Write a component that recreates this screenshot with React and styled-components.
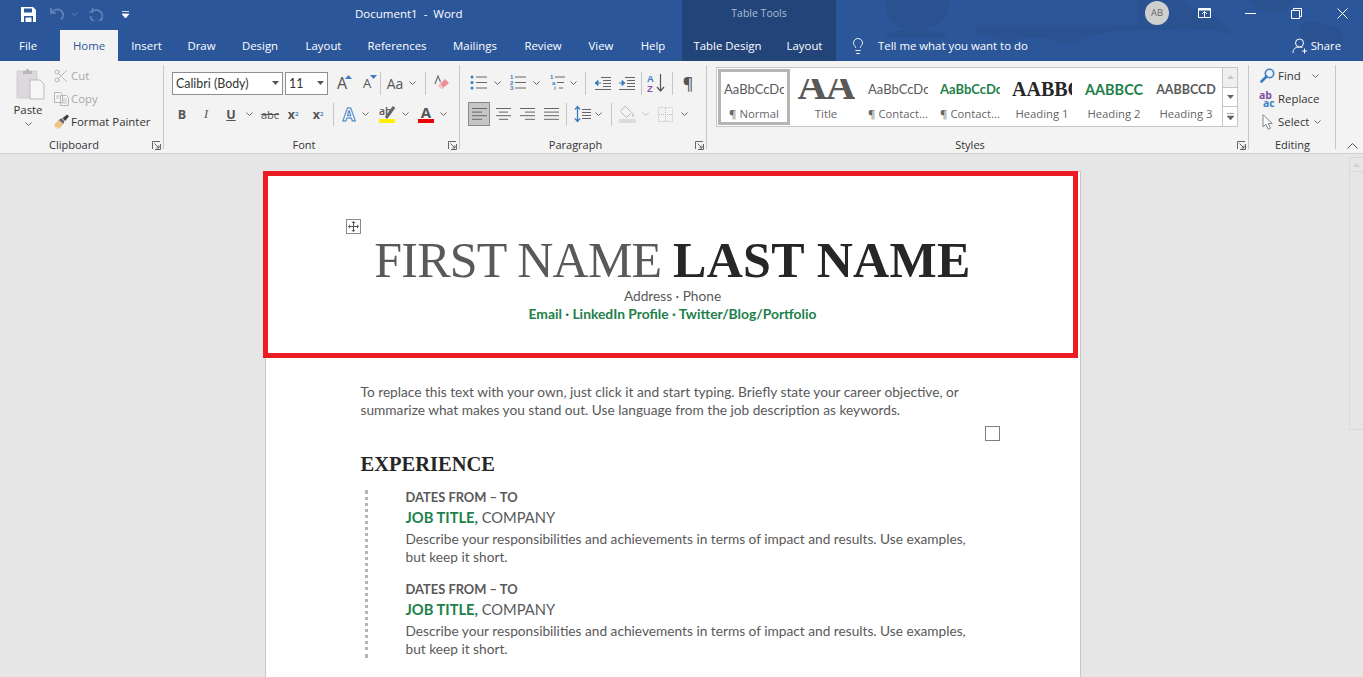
import styled, { createGlobalStyle } from "styled-components";
import { Lightbulb, Scissors } from "lucide-react";

const GlobalStyle = createGlobalStyle`
  html, body {
    margin: 0;
    height: 100%;
    overflow: hidden;
    background: #e6e6e6;
  }
  * { box-sizing: border-box; }
`;

const UI = `"Open Sans", "Noto Sans", sans-serif`;
const BODY = `Lato, "Open Sans", sans-serif`;
const SERIF = `"Liberation Serif", serif`;
const GREEN = "#217f4b";

const Window = styled.div`
  width: 1363px;
  height: 677px;
  display: flex;
  flex-direction: column;
  overflow: hidden;
  font-family: ${UI};
`;

const Chrome = styled.header`
  position: relative;
  background: #2b579a;
  color: #fff;
  height: 61px;
  flex: none;
`;

const ChromeArt = styled.svg`
  position: absolute;
  left: 836px;
  top: 0;
`;

const TitleBar = styled.div`
  position: relative;
  display: grid;
  grid-template-columns: 355px 327px 154px 1fr;
  height: 30px;
`;

const Qat = styled.div`
  display: flex;
  align-items: center;
  padding-left: 14px;
  height: 28px;
`;

const QatSlot = styled.div`
  display: flex;
  align-items: center;
  justify-content: center;
  width: ${(p) => p.$w}px;
  margin-left: ${(p) => p.$ml || 0}px;
`;

const DocTitle = styled.div`
  font-size: 11.5px;
  line-height: 28px;
  white-space: pre;
`;

const ContextTitle = styled.div`
  background: #234479;
  color: #a9bcd8;
  font-size: 10.5px;
  line-height: 27px;
  text-align: center;
`;

const WindowControls = styled.div`
  display: flex;
  justify-content: flex-end;
  align-items: flex-start;
  margin-right: -2px;
`;

const Avatar = styled.div`
  width: 24px;
  height: 24px;
  margin: 1px 12px 0 0;
  border-radius: 50%;
  background: #cfcfcf;
  color: #666;
  font-size: 9.5px;
  line-height: 24px;
  text-align: center;
`;

const WinBtn = styled.div`
  width: 46px;
  height: 26px;
  display: flex;
  align-items: center;
  justify-content: center;
`;

const TabRow = styled.nav`
  position: relative;
  display: flex;
  height: 31px;
`;

const Tab = styled.div`
  width: ${(p) => p.$w}px;
  margin-right: ${(p) => p.$mr || 0}px;
  padding-left: ${(p) => p.$pl || 0}px;
  text-align: ${(p) => (p.$pl ? "left" : "center")};
  font-size: 11.4px;
  line-height: 31px;
  background: ${(p) => (p.$active ? "#f3f3f3" : "transparent")};
  color: ${(p) => (p.$active ? "#2b579a" : "#fff")};
`;

const ContextTabs = styled.div`
  display: flex;
  background: #234479;
`;

const TellMe = styled.div`
  display: flex;
  align-items: center;
  gap: 11px;
  margin-left: 13px;
  font-size: 11.4px;
`;

const Share = styled.div`
  display: flex;
  align-items: center;
  gap: 3px;
  margin-left: auto;
  padding-right: 22px;
  font-size: 11.3px;
`;

const Ribbon = styled.section`
  display: flex;
  height: 93px;
  flex: none;
  background: #f3f3f3;
  border-bottom: 1px solid #d2d2d2;
  color: #444;
  font-size: 11.4px;
`;

const Group = styled.div`
  position: relative;
  width: ${(p) => p.$w}px;
  flex: none;
  display: flex;
  flex-direction: column;
  height: 92px;
  &::after {
    content: "";
    position: absolute;
    right: 0;
    top: 4px;
    bottom: 4px;
    width: 1px;
    background: #c6c6c6;
  }
`;

const GroupBody = styled.div`
  height: 76px;
  padding-left: ${(p) => p.$pl ?? 8}px;
`;

const GroupLabel = styled.div`
  position: relative;
  height: 16px;
  line-height: 16px;
  text-align: center;
  font-size: 11px;
  color: #333;
  padding-right: ${(p) => (p.$plain ? 0 : 16)}px;
`;

const Launcher = styled.svg`
  position: absolute;
  right: 3px;
  top: 4px;
`;

const ToolStack = styled.div`
  display: flex;
  flex-direction: column;
  gap: 7px;
  padding-top: 10px;
`;

const ToolRow = styled.div`
  display: flex;
  align-items: center;
  height: 24px;
`;

const Slot = styled.div`
  position: relative;
  flex: none;
  display: flex;
  align-items: center;
  justify-content: center;
  width: ${(p) => p.$w}px;
  height: 24px;
  margin-left: ${(p) => p.$ml || 0}px;
  color: ${(p) => p.$color || "#555"};
  font-size: ${(p) => p.$size || 12}px;
  font-weight: ${(p) => p.$weight || 400};
  font-style: ${(p) => (p.$italic ? "italic" : "normal")};
  font-family: ${(p) => p.$font || UI};
  ${(p) => p.$pressed && "background: #c6c6c6; border: 1px solid #8a8a8a;"}
`;

const Sep = styled.div`
  flex: none;
  width: 1px;
  height: 23px;
  margin-left: ${(p) => p.$ml || 0}px;
  background: #c6c6c6;
`;

const ComboBox = styled.div`
  flex: none;
  display: flex;
  align-items: center;
  justify-content: space-between;
  width: ${(p) => p.$w}px;
  height: 23px;
  margin-left: ${(p) => p.$ml || 0}px;
  padding: 0 3px;
  background: #fff;
  border: 1px solid #8f8f8f;
  color: #333;
  font-family: ${BODY};
  font-size: 12.4px;
`;

const Underlined = styled.span`
  text-decoration: underline;
`;

const Struck = styled.span`
  text-decoration: line-through;
`;

const Sub = styled.sub`
  font-size: 6px;
  color: #4a82bd;
  line-height: 0;
`;

const Sup = styled.sup`
  font-size: 6px;
  color: #4a82bd;
  line-height: 0;
`;

const OutlineA = styled.span`
  color: #fff;
  font-size: 18px;
  font-weight: 700;
  -webkit-text-stroke: 1px #3d7fc6;
`;

const ColorA = styled.span`
  display: block;
  width: 16px;
  color: #555;
  font-size: 15px;
  font-weight: 700;
  line-height: 14px;
  text-align: center;
  border-bottom: 4px solid ${(p) => p.$bar};
`;

const HighlightMark = styled.span`
  position: relative;
  display: block;
  width: 16px;
  height: 18px;
  font-size: 10.5px;
  font-weight: 600;
  line-height: 13px;
  color: #555;
  border-bottom: 4px solid #ffef00;
`;

const HighlightPen = styled.svg`
  position: absolute;
  right: 0;
  top: 0;
`;

const Caret = styled.svg`
  position: absolute;
  right: ${(p) => p.$r}px;
  top: ${(p) => p.$t}px;
`;

const ClipLayout = styled.div`
  display: flex;
  padding-top: 3px;
`;

const PasteColumn = styled.div`
  width: 53px;
  padding: 4px 0 0 16px;
  color: #333;
`;

const PasteText = styled.div`
  width: 44px;
  margin: -2px 0 0 -10px;
  text-align: center;
  line-height: 18px;
`;

const PasteCaret = styled.div`
  width: 24px;
  line-height: 6px;
  text-align: center;
`;

const CommandColumn = styled.div`
  display: flex;
  flex-direction: column;
`;

const Command = styled.div`
  display: flex;
  align-items: center;
  height: 23px;
  color: ${(p) => (p.$dim ? "#a8a8a8" : "#333")};
  gap: ${(p) => p.$gap ?? 2}px;
`;

const CommandIcon = styled.span`
  display: flex;
  justify-content: center;
  width: 16px;
`;

const EditColumn = styled(CommandColumn)`
  padding: 3px 0 0 10px;
`;

const ReplaceMark = styled.span`
  display: block;
  width: 18px;
  font-size: 10.5px;
  line-height: 8px;
  font-weight: 700;
  color: #7d4fa5;
`;

const ReplaceAc = styled.span`
  display: block;
  color: #3d7fc6;
  padding-left: 4px;
`;

const Gallery = styled.div`
  display: flex;
  width: 522px;
  height: 60px;
  margin: 6px 0 0 9px;
  padding-left: 1px;
  background: #fff;
  border: 1px solid #c6c6c6;
`;

const StyleCell = styled.div`
  width: 72px;
  height: 56px;
  margin-top: 1px;
  display: flex;
  flex-direction: column;
  align-items: center;
  overflow: hidden;
  border: ${(p) => (p.$active ? "3px solid #b5b5b2" : "3px solid transparent")};
`;

const StylePreview = styled.div`
  width: 60px;
  height: 34px;
  display: flex;
  align-items: center;
  justify-content: ${(p) => p.$align || "flex-start"};
  overflow: hidden;
  white-space: nowrap;
  color: ${(p) => p.$color || "#595959"};
  font-family: ${(p) => p.$font || BODY};
  font-size: ${(p) => p.$size || 13}px;
  font-weight: ${(p) => p.$weight || 400};
`;

const TitlePreview = styled.div`
  height: 20px;
  margin-top: 7px;
  margin-bottom: 7px;
  overflow: hidden;
  font-family: ${SERIF};
  font-size: 41px;
  font-weight: 700;
  line-height: 20px;
  color: #595959;
  letter-spacing: -1px;
  white-space: nowrap;
  span {
    display: block;
    margin-top: -4px;
  }
`;

const StyleName = styled.div`
  font-size: 11.3px;
  color: #666;
  line-height: 16px;
  white-space: nowrap;
`;

const GalleryScroll = styled.div`
  margin-left: auto;
  width: 15px;
  display: flex;
  flex-direction: column;
  border-left: 1px solid #c6c6c6;
`;

const ScrollBtn = styled.div`
  flex: 1;
  display: flex;
  align-items: center;
  justify-content: center;
  background: ${(p) => (p.$off ? "#efefef" : "#fff")};
  & + & {
    border-top: 1px solid #c6c6c6;
  }
`;

const CollapseSlot = styled.div`
  flex: 1;
  display: flex;
  align-items: flex-end;
  justify-content: flex-end;
  padding: 0 5px 4px 0;
`;

const Workspace = styled.main`
  flex: 1;
  display: flex;
  min-height: 0;
  background: #e6e6e6;
`;

const PageArea = styled.div`
  flex: 1;
  display: flex;
  justify-content: center;
  padding: 17px 4px 0 0;
  overflow: hidden;
`;

const Page = styled.article`
  position: relative;
  width: 816px;
  height: 600px;
  flex: none;
  padding: 62px 95px 0 95px;
  background: #fff;
  border: 1px solid #c8c8c8;
  color: #595959;
  font-family: ${BODY};
  font-size: 13.7px;
`;

const Annotation = styled.div`
  position: absolute;
  left: -3px;
  top: -1px;
  width: 815px;
  height: 187px;
  border: 5px solid #ed1c24;
`;

const MoveHandle = styled.div`
  position: absolute;
  left: 80px;
  top: 47px;
  width: 15px;
  height: 15px;
  display: flex;
  align-items: center;
  justify-content: center;
  background: #fff;
  border: 1px solid #8c8c8c;
`;

const ResizeHandle = styled.div`
  position: absolute;
  left: 719px;
  top: 254px;
  width: 15px;
  height: 15px;
  border: 1px solid #7f7f7f;
`;

const Name = styled.h1`
  margin: 0;
  text-align: center;
  font-family: ${SERIF};
  font-size: 50px;
  font-weight: 400;
  line-height: 53px;
  letter-spacing: -0.8px;
  color: #595959;
  white-space: nowrap;
`;

const LastName = styled.strong`
  color: #262626;
  font-weight: 700;
  letter-spacing: 0.3px;
`;

const ContactLine = styled.div`
  text-align: center;
  line-height: 18px;
  color: ${(p) => (p.$green ? GREEN : "#595959")};
  font-weight: ${(p) => (p.$green ? 700 : 400)};
  font-size: ${(p) => (p.$green ? 13.85 : 13.7)}px;
`;

const Objective = styled.p`
  margin: 60px 0 0;
  line-height: 18px;
`;

const SectionHeading = styled.h2`
  margin: 34px 0 0;
  font-family: ${SERIF};
  font-size: 20.5px;
  font-weight: 700;
  line-height: 23px;
  color: #262626;
`;

const Timeline = styled.div`
  margin: 14px 0 0 4px;
  padding-left: 38px;
  border-left: 3px dotted #b5b5b5;
  width: 610px;
`;

const Entry = styled.div`
  & + & {
    margin-top: 16px;
  }
`;

const Dates = styled.div`
  font-size: 12.9px;
  font-weight: 700;
  line-height: 14px;
  color: #595959;
`;

const JobLine = styled.div`
  margin-top: 2px;
  font-size: 14.7px;
  line-height: 22px;
`;

const JobTitle = styled.b`
  color: ${GREEN};
`;

const Describe = styled.p`
  margin: 2px 0 0;
  line-height: 18px;
`;

const VScroll = styled.aside`
  flex: none;
  align-self: flex-start;
  width: 14px;
  height: 273px;
  margin-top: 3px;
  border: 1px solid #d9d9d9;
  border-right: none;
`;

const VScrollUp = styled.div`
  height: 14px;
  display: flex;
  align-items: center;
  justify-content: center;
  border-bottom: 1px solid #d9d9d9;
`;

/* ---- drawings ---- */

const Chevron = ({ color = "#666" }) => (
  <svg width="7" height="4" viewBox="0 0 7 4">
    <path d="M.5.5l3 3 3-3" fill="none" stroke={color} />
  </svg>
);

const Corner = () => (
  <Launcher width="9" height="9" viewBox="0 0 9 9">
    <path d="M.5 8V.5H8M8.5 3v5.5H3M2.5 2.5L7 7M4.5 7H7V4.5" fill="none" stroke="#666" />
  </Launcher>
);

const Lines = ({ rows, stroke = "#666" }) => (
  <svg width="17" height="14" viewBox="0 0 17 14">
    {rows.map(([x1, x2], i) => (
      <path key={i} d={`M${x1} ${1.5 + i * 3.6}H${x2}`} stroke={stroke} />
    ))}
  </svg>
);

const ListIcon = ({ kind }) => {
  const marks = [2, 7.5, 13];
  return (
    <svg width="18" height="16" viewBox="0 0 18 16">
      {marks.map((y, i) => (
        <g key={y}>
          {kind === "bullet" && <circle cx="2" cy={y} r="1.5" fill="#3e7cbf" />}
          {kind !== "bullet" && (
            <text x={kind === "multi" ? 1 + i * 2 : 1} y={y + 2} fontSize="6" fontWeight="700" fill="#3e7cbf" fontFamily="Liberation Sans">
              {kind === "multi" ? "1ai"[i] : i + 1}
            </text>
          )}
          <path d={`M${kind === "multi" ? 6 + i * 2 : 6} ${y}H${kind === "multi" ? 16 - i : 17}`} stroke="#666" />
        </g>
      ))}
    </svg>
  );
};

const IndentIcon = ({ flip }) => (
  <svg width="17" height="14" viewBox="0 0 17 14">
    <path d="M7 1.5h10M9 4.5h8M9 7.5h8M9 10.5h8M1 13.5h16" stroke="#666" />
    <path d={flip ? "M1 7h5M4 4.5L7 7l-3 2.5z" : "M7 7H2M4 4.5L1 7l3 2.5z"} fill="#3e7cbf" stroke="#3e7cbf" />
  </svg>
);

const SortIcon = () => (
  <svg width="20" height="20" viewBox="0 0 20 20">
    <text x="0" y="9" fontSize="9.5" fontWeight="700" fill="#3e7cbf" fontFamily="Liberation Sans">A</text>
    <text x="0" y="19" fontSize="9.5" fontWeight="700" fill="#8a57a8" fontFamily="Liberation Sans">Z</text>
    <path d="M13.5 1v17M10 14l3.5 4 3.5-4" fill="none" stroke="#555" strokeWidth="1.2" />
  </svg>
);

const LineSpacingIcon = () => (
  <svg width="17" height="18" viewBox="0 0 17 18">
    <path d="M3.5 2v14M1 4.5l2.5-3 2.5 3M1 13.5l2.5 3 2.5-3" fill="none" stroke="#3e7cbf" strokeWidth="1.3" />
    <path d="M8 4.5h9M8 7.5h9M8 10.5h9M8 13.5h9" stroke="#666" />
  </svg>
);

const ShadingIcon = () => (
  <svg width="17" height="18" viewBox="0 0 17 18">
    <path d="M6 1l6.5 6.5L7.5 12.5 1.5 6.5z" fill="#f6f6f6" stroke="#b8b8b8" />
    <path d="M13 7.5c1.5 1.5 2.5 3 2 4s-2 0-2-1z" fill="#c9c9c9" />
    <rect y="14" width="17" height="4" fill="#dcdcdc" />
  </svg>
);

const BorderIcon = () => (
  <svg width="15" height="15" viewBox="0 0 15 15">
    <rect x=".5" y=".5" width="14" height="14" fill="none" stroke="#d2b9d2" strokeDasharray="1 1" />
    <path d="M7.5 1v13M1 7.5h13" stroke="#bcbcbc" strokeDasharray="1 1" />
  </svg>
);

const EraserIcon = () => (
  <svg width="16" height="16" viewBox="0 0 16 16">
    <path d="M1 9L4 1l2.5 6" fill="none" stroke="#777" strokeWidth="1.3" />
    <path d="M4 11l7-7 4 4-7 6z" fill="#ee8f98" />
    <path d="M4 11l2-2 4 4-2 1z" fill="#f8c9cc" />
  </svg>
);

const PasteIcon = () => (
  <svg width="29" height="32" viewBox="0 0 29 32">
    <path d="M1 3h20v27H1z" fill="#dcd8dc" stroke="#d0ccd0" />
    <path d="M7 3h3c0-3 3-3 3 0h3v3H7z" fill="#b9b5b9" />
    <path d="M14 12h10l4 4v15H14z" fill="#f6f6f6" stroke="#bdbabd" />
  </svg>
);

const CopyIcon = () => (
  <svg width="15" height="14" viewBox="0 0 15 14">
    <path d="M.5.5h6l2 2v8h-8zM6.5 3.5h6l2 2v8h-8z" fill="#f6f6f6" stroke="#b5b5b5" />
    <path d="M2 4h4M2 6h3M8 7h5M8 9h5M8 11h5" stroke="#c4c4c4" />
  </svg>
);

const BrushIcon = () => (
  <svg width="17" height="16" viewBox="0 0 17 16">
    <path d="M1 11l5-5 5 4-4 5H4l1-2-2 1z" fill="#edc488" />
    <path d="M6 6l3-2 3 3-1 3z" fill="#666" />
    <path d="M10 4l5-4 2 2-4 5z" fill="#3d3d3d" />
  </svg>
);

const FindIcon = () => (
  <svg width="15" height="15" viewBox="0 0 15 15">
    <circle cx="9.5" cy="5.5" r="4.2" fill="#eaf2fb" stroke="#3e7cbf" strokeWidth="1.6" />
    <path d="M6.5 8.5L1.5 13.5" stroke="#3e7cbf" strokeWidth="2.6" strokeLinecap="round" />
  </svg>
);

const CursorIcon = () => (
  <svg width="11" height="16" viewBox="0 0 11 16">
    <path d="M1 .8v12l3-2.6 2.2 5 2.2-1-2.2-4.8h4z" fill="#fff" stroke="#777" strokeWidth=".9" strokeLinejoin="round" />
  </svg>
);

const SmallTriangle = ({ up, color }) => (
  <svg width="7" height="4" viewBox="0 0 7 4">
    <path d={up ? "M0 4l3.5-4L7 4z" : "M0 0l3.5 4L7 0z"} fill={color} />
  </svg>
);

const ChromeBackground = () => (
  <ChromeArt width="527" height="61" viewBox="0 0 527 61">
    <g fill="#2a5290">
      <path d="M50 0c-2 15 5 30 25 30s40-5 38-30z" />
      <path d="M48 34c15-6 40-6 65 0l-5 4H55z" />
      <path d="M140 25h162V0h43c3 10 35 10 47 27 8 7 3 9-12 3-30-2-80 0-105 2-17 2-30 6-32 12l-17 1c-11-7-36-12-51-3l-35-8z" />
      <path d="M463 30c0-10 17-10 27-5 15 0 20 10 15 20-5 7-35 5-42-15zM415 0c2 8 10 14 22 13 12 0 18-6 20-13z" />
    </g>
  </ChromeArt>
);

const App = () => (
  <Window>
    <GlobalStyle />
    <Chrome>
      <ChromeBackground />
      <TitleBar>
        <Qat>
          <QatSlot $w={28}>
            <svg width="15" height="15" viewBox="0 0 15 15">
              <path d="M0 0h12l3 3v12H0z" fill="#fff" />
              <path d="M3 1.5h8v4H3z" fill="#2b579a" />
              <path d="M3 9h9v6H3z" fill="#2b579a" />
              <path d="M4.5 10.5h6v4.5h-6z" fill="#fff" />
            </svg>
          </QatSlot>
          <QatSlot $w={24} $ml={3}>
            <svg width="15" height="14" viewBox="0 0 15 14">
              <path d="M1 1v5h5M1.5 5.5C4 2.5 7 1.5 10 3c4 2 4 7 1 9.5" fill="none" stroke="#6285b6" strokeWidth="1.7" />
            </svg>
          </QatSlot>
          <QatSlot $w={10}>
            <Chevron color="#6285b6" />
          </QatSlot>
          <QatSlot $w={24} $ml={5}>
            <svg width="14" height="14" viewBox="0 0 14 14">
              <path d="M3.5 1v4h-3M3.5 4.5A6 6 0 1 1 1.5 9" fill="none" stroke="#6285b6" strokeWidth="1.7" />
            </svg>
          </QatSlot>
          <QatSlot $w={24} $ml={5}>
            <svg width="7" height="7" viewBox="0 0 7 7">
              <path d="M0 .5h7M0 3h7L3.5 7z" stroke="#fff" strokeWidth=".8" fill="#fff" />
            </svg>
          </QatSlot>
        </Qat>
        <DocTitle>{"Document1  -  Word"}</DocTitle>
        <ContextTitle>Table Tools</ContextTitle>
        <WindowControls>
          <Avatar>AB</Avatar>
          <WinBtn>
            <svg width="13" height="10" viewBox="0 0 13 10">
              <path d="M.5.5h12v9H.5z" fill="none" stroke="#fff" />
              <path d="M.5 1.5h12" stroke="#fff" strokeWidth="2" />
              <path d="M6.5 9V4M4 6l2.5-2.5L9 6" fill="none" stroke="#fff" />
            </svg>
          </WinBtn>
          <WinBtn>
            <svg width="11" height="1" viewBox="0 0 11 1">
              <path d="M0 .5h11" stroke="#fff" />
            </svg>
          </WinBtn>
          <WinBtn>
            <svg width="11" height="11" viewBox="0 0 11 11">
              <path d="M.5 2.5h8v8h-8zM2.5 2.5v-2h8v8h-2" fill="none" stroke="#fff" />
            </svg>
          </WinBtn>
          <WinBtn>
            <svg width="11" height="11" viewBox="0 0 11 11">
              <path d="M.5.5l10 10M10.5.5l-10 10" stroke="#fff" />
            </svg>
          </WinBtn>
        </WindowControls>
      </TitleBar>
      <TabRow>
        <Tab $w={56} $mr={4} $pl={19}>File</Tab>
        <Tab $w={58} $active>Home</Tab>
        <Tab $w={57}>Insert</Tab>
        <Tab $w={53}>Draw</Tab>
        <Tab $w={64}>Design</Tab>
        <Tab $w={63}>Layout</Tab>
        <Tab $w={84}>References</Tab>
        <Tab $w={72}>Mailings</Tab>
        <Tab $w={64}>Review</Tab>
        <Tab $w={52}>View</Tab>
        <Tab $w={52} $mr={3}>Help</Tab>
        <ContextTabs>
          <Tab $w={91}>Table Design</Tab>
          <Tab $w={63}>Layout</Tab>
        </ContextTabs>
        <TellMe>
          <Lightbulb size={18} strokeWidth={1.2} />
          Tell me what you want to do
        </TellMe>
        <Share>
          <svg width="16" height="16" viewBox="0 0 16 16">
            <circle cx="7.5" cy="5" r="4" fill="none" stroke="#fff" />
            <path d="M1 15c0-4 2-6 6.5-6 1 0 2 .2 3 .6M12.5 10.5v5M10 13h5" fill="none" stroke="#fff" />
          </svg>
          Share
        </Share>
      </TabRow>
    </Chrome>

    <Ribbon>
      <Group $w={164}>
        <GroupBody $pl={0}>
          <ClipLayout>
            <PasteColumn>
              <PasteIcon />
              <PasteText>Paste</PasteText>
              <PasteCaret>
                <Chevron />
              </PasteCaret>
            </PasteColumn>
            <CommandColumn>
              <Command $dim>
                <CommandIcon>
                  <Scissors size={16} strokeWidth={1.4} color="#b5b5b5" />
                </CommandIcon>
                Cut
              </Command>
              <Command $dim>
                <CommandIcon>
                  <CopyIcon />
                </CommandIcon>
                Copy
              </Command>
              <Command>
                <CommandIcon>
                  <BrushIcon />
                </CommandIcon>
                Format Painter
              </Command>
            </CommandColumn>
          </ClipLayout>
        </GroupBody>
        <GroupLabel>
          Clipboard
          <Corner />
        </GroupLabel>
      </Group>

      <Group $w={296}>
        <GroupBody>
          <ToolStack>
            <ToolRow>
              <ComboBox $w={111}>
                Calibri (Body)
                <SmallTriangle color="#555" />
              </ComboBox>
              <ComboBox $w={43} $ml={2}>
                11
                <SmallTriangle color="#555" />
              </ComboBox>
              <Slot $w={22} $ml={3} $size={16}>
                A
                <Caret $r={1} $t={4} width="7" height="4" viewBox="0 0 7 4">
                  <path d="M0 4l3.5-4L7 4z" fill="#3e7cbf" />
                </Caret>
              </Slot>
              <Slot $w={22} $ml={3} $size={13}>
                A
                <Caret $r={1} $t={4} width="7" height="4" viewBox="0 0 7 4">
                  <path d="M0 0l3.5 4L7 0z" fill="#3e7cbf" />
                </Caret>
              </Slot>
              <Sep $ml={2} />
              <Slot $w={20} $ml={4} $size={14}>Aa</Slot>
              <Slot $w={14}><Chevron /></Slot>
              <Sep $ml={6} />
              <Slot $w={21} $ml={5}><EraserIcon /></Slot>
            </ToolRow>
            <ToolRow>
              <Slot $w={20} $size={12.5} $weight={700}>B</Slot>
              <Slot $w={24} $ml={2} $size={12.5} $italic $font={SERIF}>I</Slot>
              <Slot $w={26} $size={12.5} $weight={700}><Underlined>U</Underlined></Slot>
              <Slot $w={10}><Chevron /></Slot>
              <Slot $w={26} $ml={3} $size={11}><Struck>abc</Struck></Slot>
              <Slot $w={20} $size={12.5} $weight={700}>x<Sub>2</Sub></Slot>
              <Slot $w={24} $ml={3} $size={12.5} $weight={700}>x<Sup>2</Sup></Slot>
              <Sep $ml={3} />
              <Slot $w={22} $ml={4}><OutlineA>A</OutlineA></Slot>
              <Slot $w={10}><Chevron /></Slot>
              <Slot $w={22} $ml={6}>
                <HighlightMark>
                  ab
                  <HighlightPen width="10" height="14" viewBox="0 0 10 14">
                    <path d="M1 13L9 2" stroke="#666" strokeWidth="3" />
                  </HighlightPen>
                </HighlightMark>
              </Slot>
              <Slot $w={14}><Chevron /></Slot>
              <Slot $w={22} $ml={3}><ColorA $bar="#f00000">A</ColorA></Slot>
              <Slot $w={12}><Chevron /></Slot>
            </ToolRow>
          </ToolStack>
        </GroupBody>
        <GroupLabel>
          Font
          <Corner />
        </GroupLabel>
      </Group>

      <Group $w={247}>
        <GroupBody>
          <ToolStack>
            <ToolRow>
              <Slot $w={22}><ListIcon kind="bullet" /></Slot>
              <Slot $w={14}><Chevron /></Slot>
              <Slot $w={22} $ml={3}><ListIcon kind="number" /></Slot>
              <Slot $w={14}><Chevron /></Slot>
              <Slot $w={21} $ml={4}><ListIcon kind="multi" /></Slot>
              <Slot $w={11}><Chevron /></Slot>
              <Sep $ml={6} />
              <Slot $w={22} $ml={5}><IndentIcon /></Slot>
              <Slot $w={22} $ml={2}><IndentIcon flip /></Slot>
              <Sep $ml={4} />
              <Slot $w={22} $ml={4}><SortIcon /></Slot>
              <Sep $ml={4} />
              <Slot $w={22} $ml={4} $size={16} $weight={600}>¶</Slot>
            </ToolRow>
            <ToolRow>
              <Slot $w={22} $pressed><Lines rows={[[1, 16], [1, 11], [1, 16], [1, 11]]} /></Slot>
              <Slot $w={22} $ml={2}><Lines rows={[[1, 16], [4, 13], [1, 16], [4, 13]]} /></Slot>
              <Slot $w={22} $ml={2}><Lines rows={[[1, 16], [6, 16], [1, 16], [6, 16]]} /></Slot>
              <Slot $w={22} $ml={2}><Lines rows={[[1, 16], [1, 16], [1, 16], [1, 16]]} /></Slot>
              <Sep $ml={4} />
              <Slot $w={22} $ml={4}><LineSpacingIcon /></Slot>
              <Slot $w={11}><Chevron /></Slot>
              <Sep $ml={7} />
              <Slot $w={22} $ml={4}><ShadingIcon /></Slot>
              <Slot $w={14}><Chevron color="#bbb" /></Slot>
              <Slot $w={22} $ml={2}><BorderIcon /></Slot>
              <Slot $w={14} $ml={1}><Chevron /></Slot>
            </ToolRow>
          </ToolStack>
        </GroupBody>
        <GroupLabel>
          Paragraph
          <Corner />
        </GroupLabel>
      </Group>

      <Group $w={542}>
        <GroupBody $pl={0}>
          <Gallery>
            <StyleCell $active>
              <StylePreview>AaBbCcDc</StylePreview>
              <StyleName>¶ Normal</StyleName>
            </StyleCell>
            <StyleCell>
              <TitlePreview><span>AA</span></TitlePreview>
              <StyleName>Title</StyleName>
            </StyleCell>
            <StyleCell>
              <StylePreview>AaBbCcDc</StylePreview>
              <StyleName>¶ Contact...</StyleName>
            </StyleCell>
            <StyleCell>
              <StylePreview $color={GREEN} $weight={700}>AaBbCcDc</StylePreview>
              <StyleName>¶ Contact...</StyleName>
            </StyleCell>
            <StyleCell>
              <StylePreview $font={SERIF} $size={20} $weight={700} $color="#262626">AABBCC</StylePreview>
              <StyleName>Heading 1</StyleName>
            </StyleCell>
            <StyleCell>
              <StylePreview $size={14.5} $weight={700} $color={GREEN} $align="center">AABBCC</StylePreview>
              <StyleName>Heading 2</StyleName>
            </StyleCell>
            <StyleCell>
              <StylePreview $size={12.5} $weight={700} $align="center">AABBCCD</StylePreview>
              <StyleName>Heading 3</StyleName>
            </StyleCell>
            <GalleryScroll>
              <ScrollBtn $off><SmallTriangle up color="#c6c6c6" /></ScrollBtn>
              <ScrollBtn><SmallTriangle color="#666" /></ScrollBtn>
              <ScrollBtn>
                <svg width="7" height="7" viewBox="0 0 7 7">
                  <path d="M0 .5h7M0 3h7L3.5 7z" stroke="#666" strokeWidth=".6" fill="#666" />
                </svg>
              </ScrollBtn>
            </GalleryScroll>
          </Gallery>
        </GroupBody>
        <GroupLabel>
          Styles
          <Corner />
        </GroupLabel>
      </Group>

      <Group $w={87}>
        <GroupBody $pl={0}>
          <EditColumn>
            <Command $gap={3}>
              <CommandIcon><FindIcon /></CommandIcon>
              Find
              <Slot $w={16} $ml={4}><Chevron /></Slot>
            </Command>
            <Command $gap={3}>
              <CommandIcon>
                <ReplaceMark>ab<ReplaceAc>ac</ReplaceAc></ReplaceMark>
              </CommandIcon>
              Replace
            </Command>
            <Command $gap={3}>
              <CommandIcon>
                <CursorIcon />
              </CommandIcon>
              Select
              <Slot $w={10}><Chevron /></Slot>
            </Command>
          </EditColumn>
        </GroupBody>
        <GroupLabel $plain>Editing</GroupLabel>
      </Group>

      <CollapseSlot>
        <svg width="11" height="6" viewBox="0 0 11 6">
          <path d="M.5 5.5l5-5 5 5" fill="none" stroke="#555" />
        </svg>
      </CollapseSlot>
    </Ribbon>

    <Workspace>
      <PageArea>
        <Page>
          <MoveHandle>
            <svg width="11" height="11" viewBox="0 0 11 11">
              <path d="M5.5 1v9M1 5.5h9" stroke="#555" />
              <path d="M5.5 0l2 2h-4zM5.5 11l2-2h-4zM0 5.5l2-2v4zM11 5.5l-2-2v4z" fill="#555" />
            </svg>
          </MoveHandle>
          <ResizeHandle />
          <Annotation />
          <Name>
            FIRST NAME <LastName>LAST NAME</LastName>
          </Name>
          <ContactLine>Address · Phone</ContactLine>
          <ContactLine $green>Email · LinkedIn Profile · Twitter/Blog/Portfolio</ContactLine>
          <Objective>
            To replace this text with your own, just click it and start typing. Briefly state your career objective, or
            <br />
            summarize what makes you stand out. Use language from the job description as keywords.
          </Objective>
          <SectionHeading>EXPERIENCE</SectionHeading>
          <Timeline>
            <Entry>
              <Dates>DATES FROM – TO</Dates>
              <JobLine>
                <JobTitle>JOB TITLE,</JobTitle> COMPANY
              </JobLine>
              <Describe>
                Describe your responsibilities and achievements in terms of impact and results. Use examples,
                <br />
                but keep it short.
              </Describe>
            </Entry>
            <Entry>
              <Dates>DATES FROM – TO</Dates>
              <JobLine>
                <JobTitle>JOB TITLE,</JobTitle> COMPANY
              </JobLine>
              <Describe>
                Describe your responsibilities and achievements in terms of impact and results. Use examples,
                <br />
                but keep it short.
              </Describe>
            </Entry>
          </Timeline>
        </Page>
      </PageArea>
      <VScroll>
        <VScrollUp>
          <SmallTriangle up color="#d0d0d0" />
        </VScrollUp>
      </VScroll>
    </Workspace>
  </Window>
);

export default App;
